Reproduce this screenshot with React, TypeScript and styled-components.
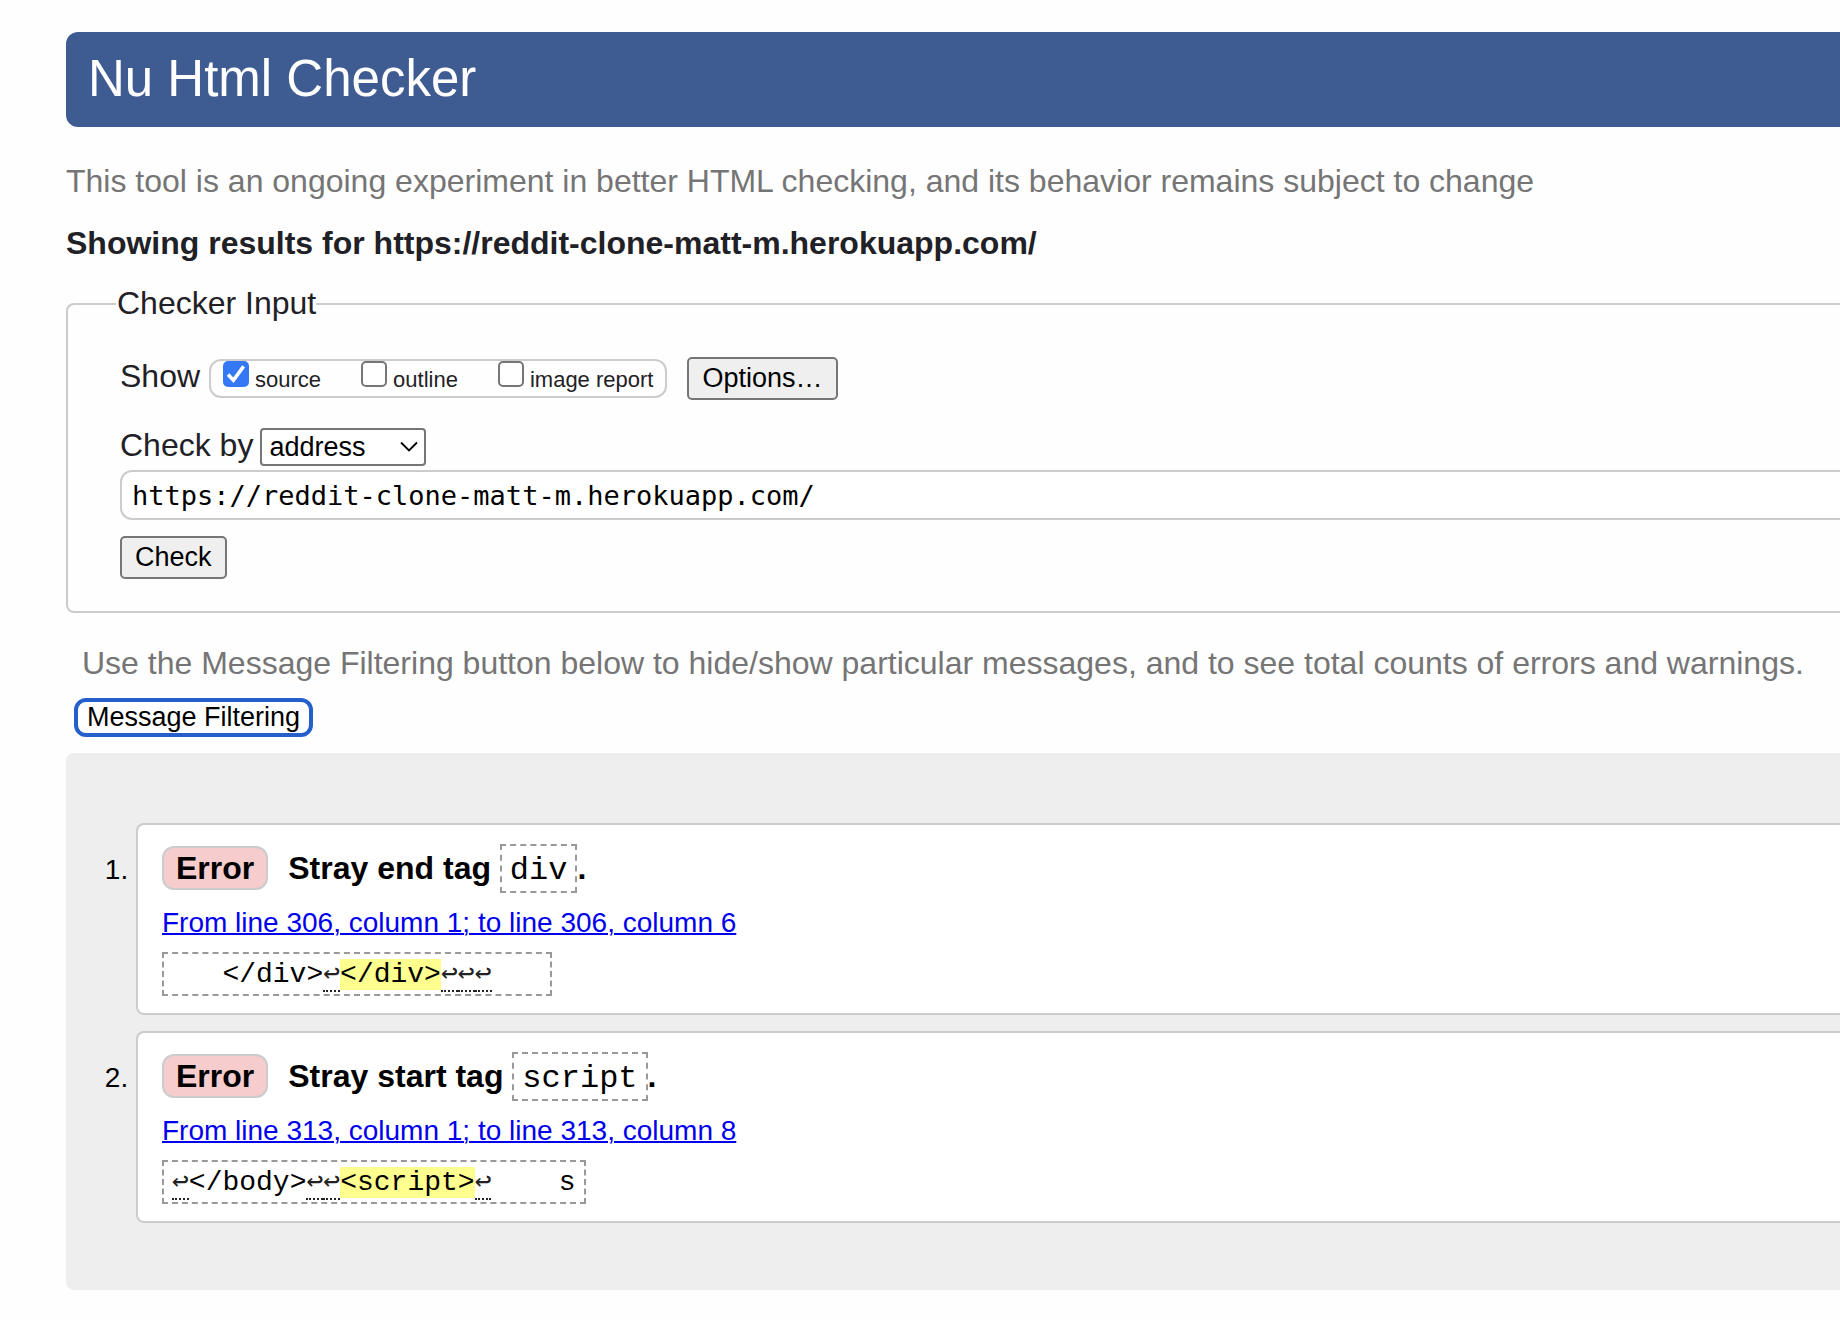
import React, { useState } from "react";
import styled, { createGlobalStyle } from "styled-components";

const sans = `"Liberation Sans", Arial, sans-serif`;
const mono = `"Liberation Mono", "DejaVu Sans Mono", monospace`;

const GlobalStyle = createGlobalStyle`
  *, *::before, *::after { box-sizing: border-box; }
  body {
    margin: 0;
    background: #fefefe;
    color: #1f2126;
    font-family: ${sans};
    font-size: 32px;
    line-height: 36px;
    overflow-x: hidden;
  }
`;

const Page = styled.div`
  padding: 32px 0 30px 66px;
`;

const Banner = styled.header`
  padding: 17px 22px 18px;
  border-radius: 12px 0 0 12px;
  background: #3f5c92;
  color: #fff;
`;

const Title = styled.h1`
  margin: 0;
  font-size: 51px;
  font-weight: 400;
  line-height: 60px;
`;

const Tagline = styled.p`
  margin: 36px 0 0;
  color: #757575;
`;

const Subject = styled.h2`
  margin: 26px 0 0;
  font-size: 32px;
  line-height: 36px;
`;

const InputSet = styled.fieldset`
  margin: 23px 0 0;
  padding: 33px 0 32px 48px;
  border: 2px solid #ccc;
  border-right: 0;
  border-radius: 8px 0 0 8px;
`;

const Legend = styled.legend`
  padding: 1px 0 3px 1px;
`;

const Fields = styled.div`
  display: flex;
  flex-direction: column;
  align-items: flex-start;
  padding-left: 4px;
`;

const Row = styled.div`
  display: flex;
  align-items: baseline;
  margin-bottom: 27px;
`;

const CheckByRow = styled(Row)`
  gap: 7px;
  margin-bottom: 4px;
`;

const ShowGroup = styled.div`
  display: flex;
  align-items: baseline;
  gap: 40px;
  margin: 0 20px 0 9px;
  padding: 0 12px 3px;
  border: 2px solid #ccc;
  border-radius: 12px;
  font-size: 22px;
  line-height: 26px;
`;

const Choice = styled.label`
  display: flex;
  align-items: baseline;
  gap: 6px;
`;

const Tick = styled.input`
  width: 26px;
  height: 26px;
  margin: 0;
  appearance: none;
  border: 2px solid #767676;
  border-radius: 5px;
  background: #fff;

  &:checked {
    border-color: #3478f6;
    background: #3478f6;
  }
`;

const TickBox = styled.span`
  display: inline-grid;
  height: 26px;

  & > * {
    grid-area: 1 / 1;
  }

  & > svg {
    pointer-events: none;
  }
`;

const Button = styled.button`
  padding: 4px 13px 5px;
  border: 2px solid #767676;
  border-radius: 5px;
  background: #efefef;
  color: #000;
  font: 27px/30px ${sans};
`;

const FilterButton = styled(Button)`
  display: block;
  margin: 17px 0 16px 8px;
  padding: 0 9px 1px;
  border: 4px solid #255fcc;
  border-radius: 12px;
  background: #fff;
`;

const SelectBox = styled.span`
  display: inline-grid;
  align-items: center;

  & > * {
    grid-area: 1 / 1;
  }

  & > svg {
    justify-self: end;
    margin-right: 8px;
    pointer-events: none;
  }
`;

const Select = styled.select`
  width: 166px;
  padding: 2px 7px;
  appearance: none;
  border: 2px solid #767676;
  border-radius: 4px;
  background: #fff;
  color: #000;
  font: 27px/30px ${sans};
`;

const Address = styled.input`
  width: 100%;
  margin-bottom: 16px;
  padding: 8px 10px 6px;
  border: 2px solid #ccc;
  border-right: 0;
  border-radius: 12px 0 0 12px;
  background: #fff;
  color: #000;
  font: 27px/32px "DejaVu Sans Mono", monospace;
`;

const Hint = styled.p`
  margin: 32px 0 0;
  padding-left: 16px;
  color: #757575;
  white-space: nowrap;
`;

const Results = styled.ol`
  display: grid;
  gap: 16px;
  margin: 0;
  padding: 70px 0 67px 70px;
  border-radius: 8px 0 0 8px;
  background: #eee;
  color: #000;
  font-size: 28px;
  line-height: 32px;
`;

const Message = styled.li`
  padding: 19px 24px 17px;
  border: 2px solid #ccc;
  border-right: 0;
  border-radius: 8px 0 0 8px;
  background: #fff;

  &::marker {
    font-size: 28px;
  }
`;

const Summary = styled.p`
  margin: 0;
  font-size: 32px;
  font-weight: 700;
  line-height: 36px;
`;

const Badge = styled.strong`
  display: inline-block;
  margin-right: 20px;
  padding: 2px 12px;
  border: 2px solid #ccc;
  border-radius: 12px;
  background: #f6cccd;
`;

const TagName = styled.code`
  display: inline-block;
  padding: 7px 8px 2px;
  border: 2px dashed #999;
  font: 32px/36px ${mono};
`;

const Location = styled.a`
  display: block;
  width: fit-content;
  margin: 14px 0 13px;
  color: #0000ee;
  text-decoration-thickness: 2px;
`;

const Extract = styled.code`
  display: block;
  width: fit-content;
  padding: 5px 8px 3px;
  border: 2px dashed #999;
  font: 28px/32px ${mono};
  white-space: pre;
`;

const Highlight = styled.mark`
  background: #ffff8f;
  color: inherit;
`;

const LineBreak = styled.span`
  border-bottom: 2px dotted #222;
  color: #222;
`;

type Piece = { kind: "text" | "mark" | "break"; text: string };

const t = (text: string): Piece => ({ kind: "text", text });
const m = (text: string): Piece => ({ kind: "mark", text });
const br: Piece = { kind: "break", text: "↩" };

const messages = [
  {
    summary: "Stray end tag",
    tag: "div",
    location: "From line 306, column 1; to line 306, column 6",
    extract: [t("   </div>"), br, m("</div>"), br, br, br, t("   ")],
  },
  {
    summary: "Stray start tag",
    tag: "script",
    location: "From line 313, column 1; to line 313, column 8",
    extract: [br, t("</body>"), br, br, m("<script>"), br, t("    s")],
  },
];

function ExtractPiece({ kind, text }: Piece) {
  if (kind === "mark") return <Highlight>{text}</Highlight>;
  if (kind === "break") return <LineBreak>{text}</LineBreak>;
  return <>{text}</>;
}

function ShowOption({ name, initial = false }: { name: string; initial?: boolean }) {
  const [on, setOn] = useState(initial);
  return (
    <Choice>
      <TickBox>
        <Tick type="checkbox" checked={on} onChange={(e) => setOn(e.target.checked)} />
        {on && (
          <svg width="26" height="26" viewBox="0 0 26 26" fill="none" aria-hidden="true">
            <path d="M5 13.6 L10.4 19.2 L20.6 5.4" stroke="#fff" strokeWidth="3.6" />
          </svg>
        )}
      </TickBox>
      {name}
    </Choice>
  );
}

export default function App() {
  const [address, setAddress] = useState("https://reddit-clone-matt-m.herokuapp.com/");
  return (
    <>
      <GlobalStyle />
      <Page>
        <Banner>
          <Title>Nu Html Checker</Title>
        </Banner>
        <Tagline>
          This tool is an ongoing experiment in better HTML checking, and its behavior remains
          subject to change
        </Tagline>
        <Subject>Showing results for https://reddit-clone-matt-m.herokuapp.com/</Subject>

        <InputSet>
          <Legend>Checker Input</Legend>
          <Fields>
            <Row>
              <span id="show-label">Show</span>
              <ShowGroup role="group" aria-labelledby="show-label">
                <ShowOption name="source" initial />
                <ShowOption name="outline" />
                <ShowOption name="image report" />
              </ShowGroup>
              <Button type="button">Options…</Button>
            </Row>
            <CheckByRow>
              <label htmlFor="check-by">Check by</label>
              <SelectBox>
                <Select id="check-by" defaultValue="address">
                  <option value="address">address</option>
                  <option value="upload">file upload</option>
                  <option value="text">text input</option>
                </Select>
                <svg width="18" height="12" viewBox="0 0 18 12" fill="none" aria-hidden="true">
                  <path d="M1 1.5 L9 9.5 L17 1.5" stroke="#000" strokeWidth="1.8" />
                </svg>
              </SelectBox>
            </CheckByRow>
            <Address
              type="text"
              aria-label="Address"
              value={address}
              onChange={(e) => setAddress(e.target.value)}
            />
            <Button type="submit">Check</Button>
          </Fields>
        </InputSet>

        <Hint>
          Use the Message Filtering button below to hide/show particular messages, and to see total
          counts of errors and warnings.
        </Hint>
        <FilterButton type="button">Message Filtering</FilterButton>

        <Results>
          {messages.map((msg) => (
            <Message key={msg.tag}>
              <Summary>
                <Badge>Error</Badge>
                {msg.summary} <TagName>{msg.tag}</TagName>.
              </Summary>
              <Location href="#extract">{msg.location}</Location>
              <Extract>
                {msg.extract.map((piece, i) => (
                  <ExtractPiece key={i} {...piece} />
                ))}
              </Extract>
            </Message>
          ))}
        </Results>
      </Page>
    </>
  );
}
